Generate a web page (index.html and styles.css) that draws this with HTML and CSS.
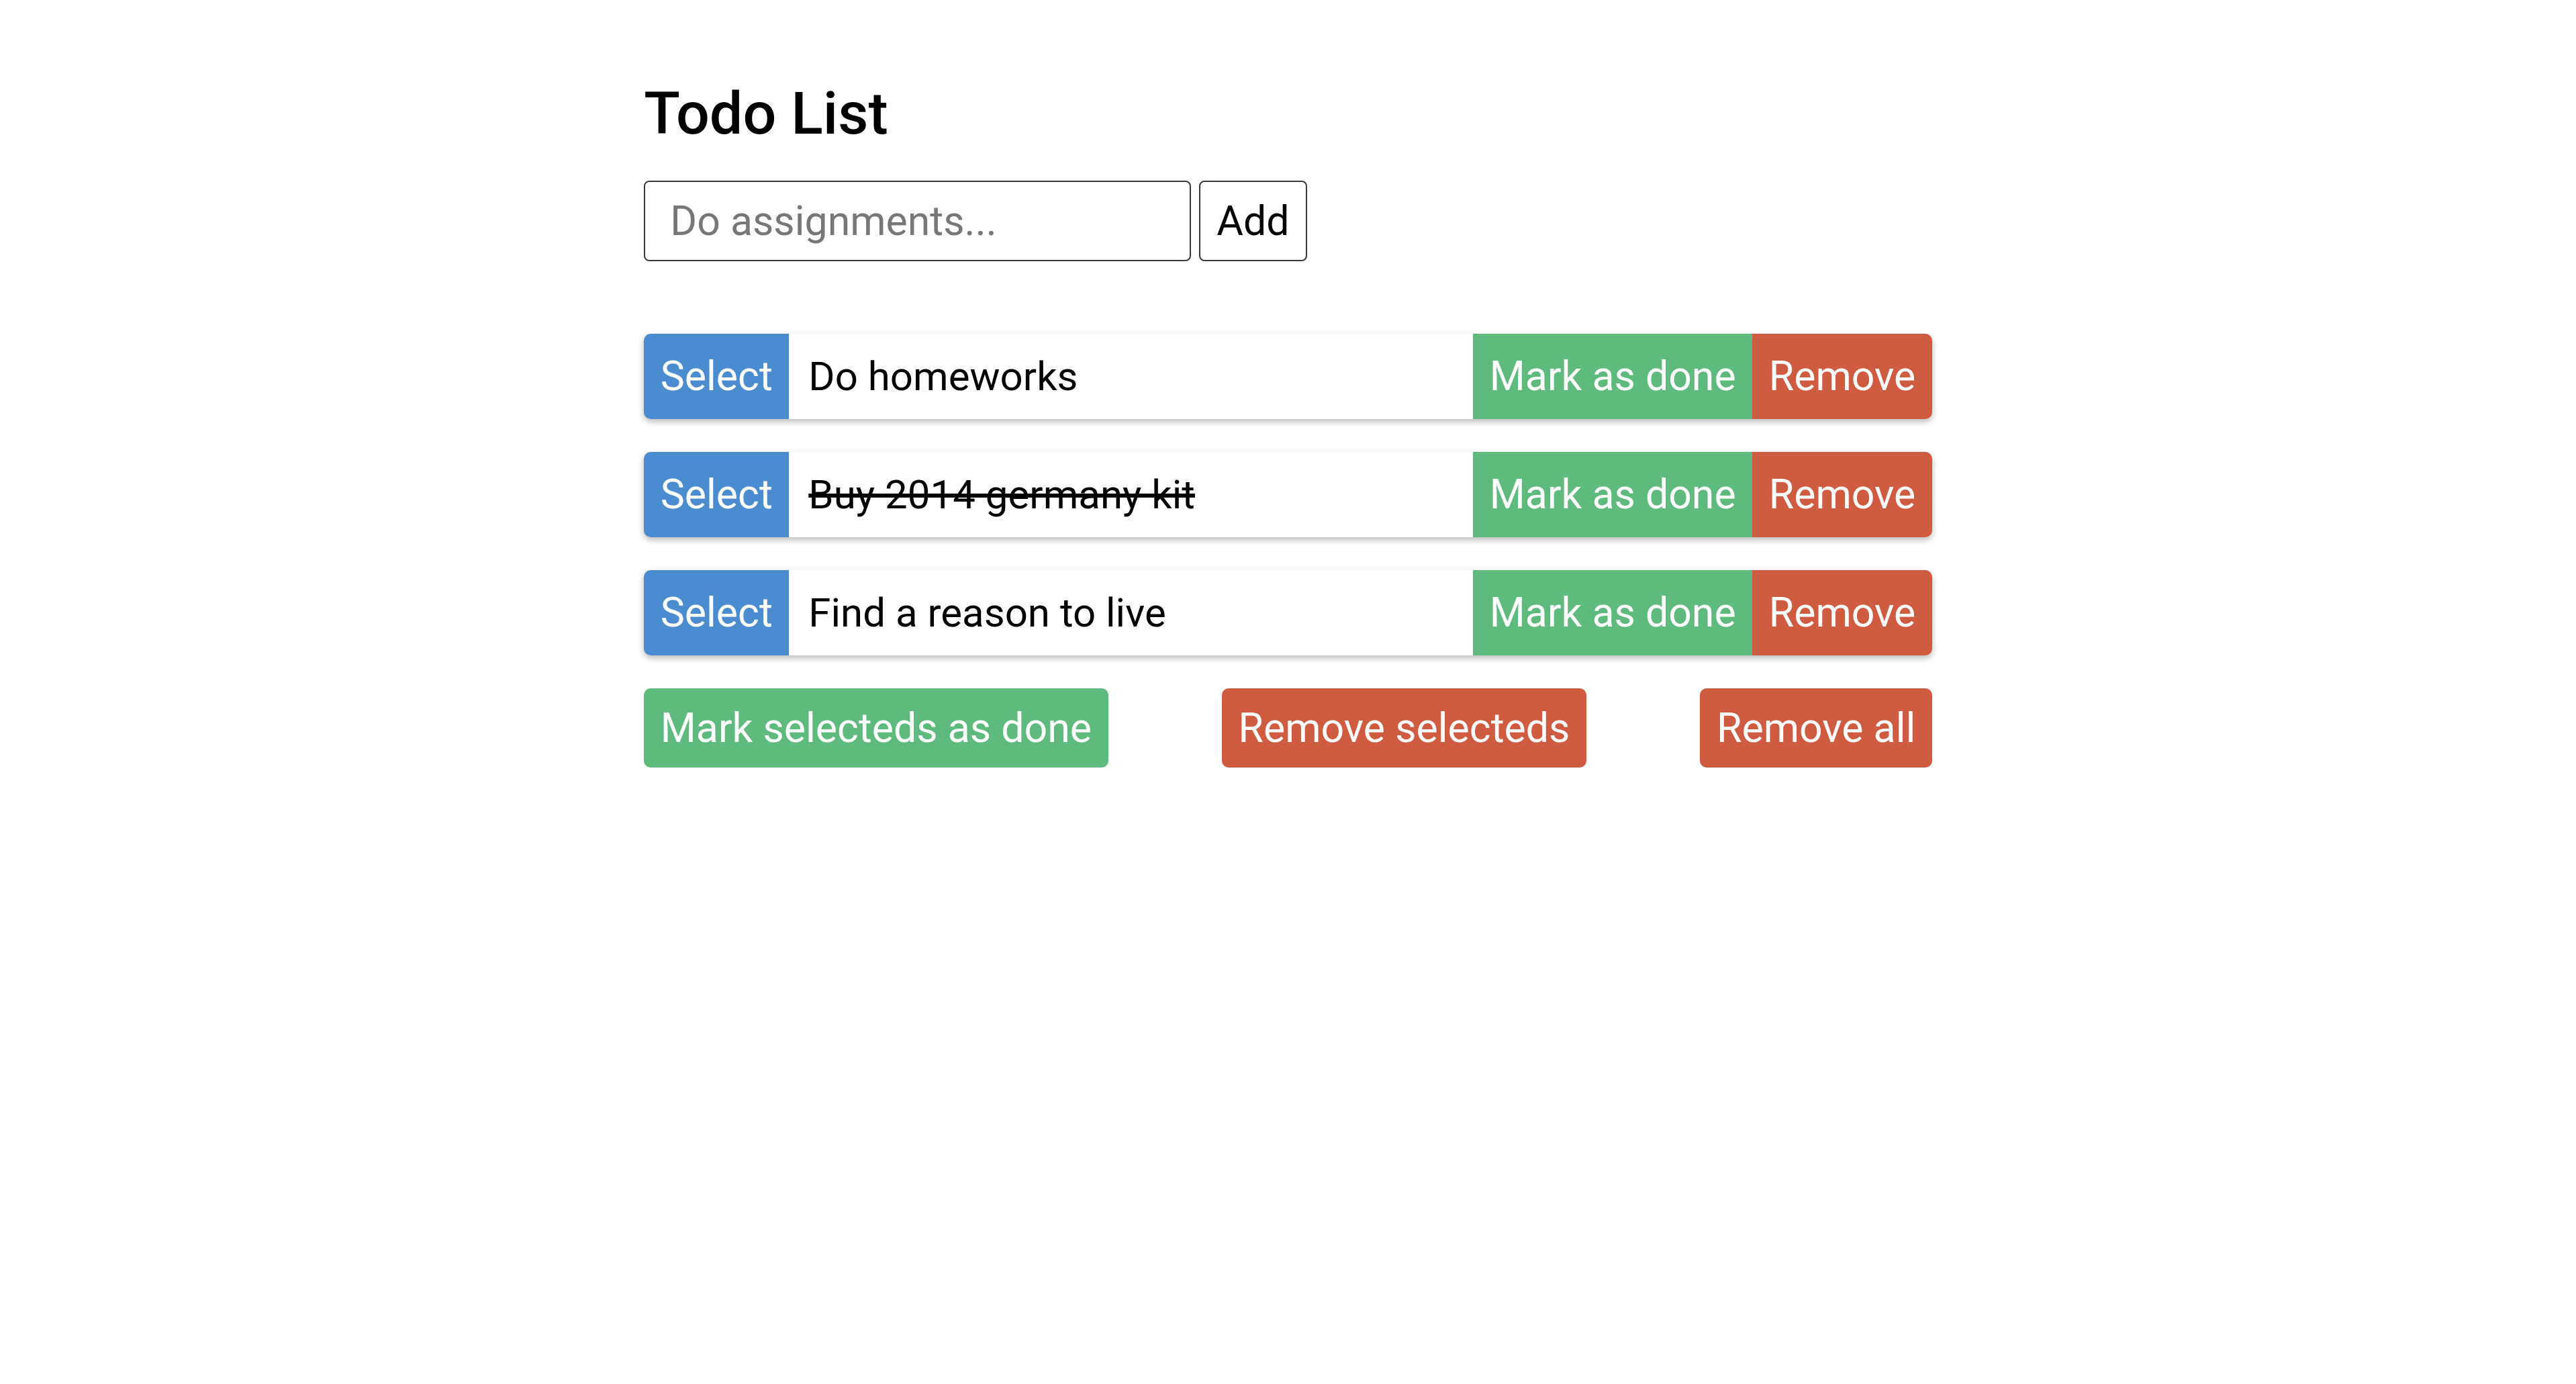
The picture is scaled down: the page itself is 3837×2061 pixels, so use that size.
FILE: index.html
```html
<!DOCTYPE html>
<html lang="en">
<head>
<meta charset="utf-8">
<title>Todo List</title>
<link rel="stylesheet" href="styles.css">
</head>
<body>
<main class="container">
  <h1 class="title">Todo List</h1>
  <form class="add-form">
    <input class="add-input" type="text" placeholder="Do assignments...">
    <button class="add-btn" type="button">Add</button>
  </form>
  <ul class="todo-list">
    <li class="todo">
      <button class="btn btn-blue" type="button">Select</button>
      <span class="todo-text">Do homeworks</span>
      <button class="btn btn-green" type="button">Mark as done</button>
      <button class="btn btn-red" type="button">Remove</button>
    </li>
    <li class="todo">
      <button class="btn btn-blue" type="button">Select</button>
      <span class="todo-text done">Buy 2014 germany kit</span>
      <button class="btn btn-green" type="button">Mark as done</button>
      <button class="btn btn-red" type="button">Remove</button>
    </li>
    <li class="todo">
      <button class="btn btn-blue" type="button">Select</button>
      <span class="todo-text">Find a reason to live</span>
      <button class="btn btn-green" type="button">Mark as done</button>
      <button class="btn btn-red" type="button">Remove</button>
    </li>
  </ul>
  <div class="actions">
    <button class="btn btn-green action" type="button">Mark selecteds as done</button>
    <button class="btn btn-red action" type="button">Remove selecteds</button>
    <button class="btn btn-red action" type="button">Remove all</button>
  </div>
</main>
</body>
</html>
```
FILE: styles.css
```css
* { box-sizing: border-box; }

html, body {
  margin: 0;
  padding: 0;
  background: #ffffff;
}

body {
  font-family: Roboto, "Liberation Sans", Arial, sans-serif;
  color: #000000;
}

.container {
  width: 50%;
  margin: 0 auto;
  padding-top: 117px;
}

.title {
  margin: 0;
  font-size: 88px;
  font-weight: 500;
  line-height: 1.172;
}

.add-form {
  display: flex;
  align-items: stretch;
  gap: 12px;
  margin-top: 49px;
}

.add-input {
  width: 815px;
  height: 120px;
  border: 2px solid #3a3a3a;
  border-radius: 8px;
  padding: 0 37px;
  font-family: inherit;
  font-size: 60.8px;
  color: #000;
  outline: none;
}

.add-input::placeholder {
  color: #777777;
}

.add-btn {
  height: 120px;
  border: 2px solid #3a3a3a;
  border-radius: 8px;
  background: #ffffff;
  padding: 0 24px;
  font-family: inherit;
  font-size: 60.8px;
  color: #000;
}

.todo-list {
  list-style: none;
  margin: 108px 0 0 0;
  padding: 0;
  display: flex;
  flex-direction: column;
  gap: 49px;
}

.todo {
  display: flex;
  align-items: stretch;
  height: 127px;
  border-radius: 10px;
  overflow: hidden;
  box-shadow: 0 4px 10px rgba(0, 0, 0, 0.28);
  background: #ffffff;
}

.btn {
  border: none;
  margin: 0;
  padding: 0 24.5px;
  font-family: inherit;
  font-size: 60.8px;
  color: #ffffff;
  line-height: 1.172;
  white-space: nowrap;
}

.btn-blue { background: #4a8ccf; }
.btn-green { background: #5fba7d; }
.btn-red { background: #cf5c40; }

.todo-text {
  flex: 1;
  display: flex;
  align-items: center;
  padding-left: 29px;
  font-size: 60px;
  color: #000000;
}

.todo-text.done {
  text-decoration: line-through;
}

.actions {
  display: flex;
  justify-content: space-between;
  margin-top: 49px;
}

.action {
  height: 118px;
  border-radius: 10px;
  padding: 0 24.5px;
}
```
